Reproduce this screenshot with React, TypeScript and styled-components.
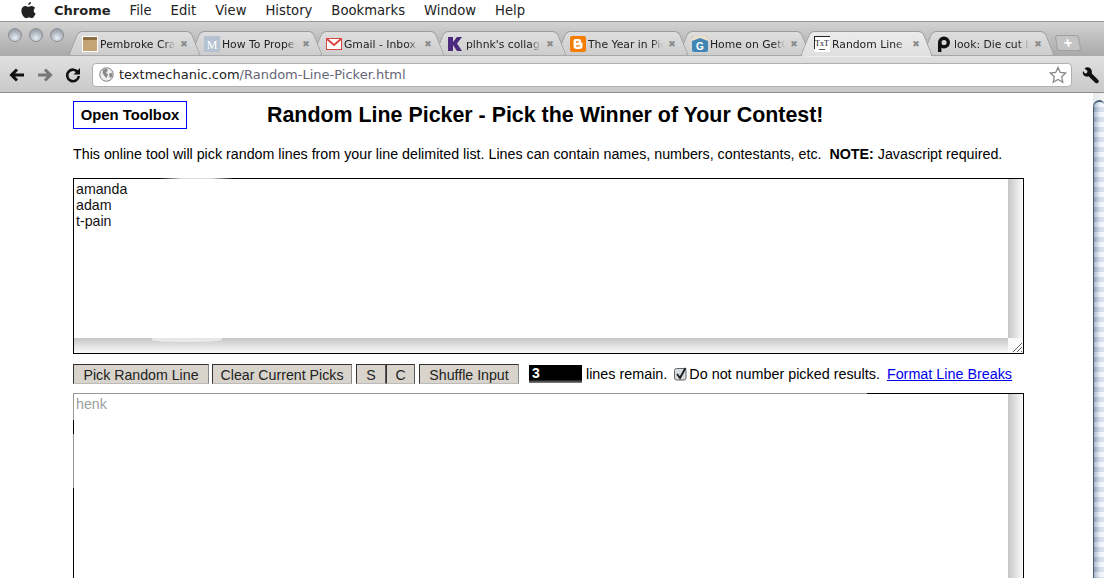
import React from 'react'
import styled, { createGlobalStyle } from 'styled-components'

const Global = createGlobalStyle`
  html, body {
    margin: 0;
    padding: 0;
    background: #fff;
    overflow: hidden;
  }
  body {
    font-family: 'Liberation Sans', Arial, sans-serif;
  }
`

const tabs = [
  { title: 'Pembroke Cra', icon: 'box' },
  { title: 'How To Prope', icon: 'm' },
  { title: 'Gmail - Inbox', icon: 'gmail' },
  { title: "plhnk's collag", icon: 'k' },
  { title: 'The Year in Pic', icon: 'blogger' },
  { title: 'Home on GetG', icon: 'glue' },
  { title: 'Random Line F', icon: 'txt', active: true },
  { title: 'look: Die cut b', icon: 'p' },
]

const menus = ['File', 'Edit', 'View', 'History', 'Bookmarks', 'Window', 'Help']

const Favicon = ({ kind }: { kind: string }) => {
  switch (kind) {
    case 'box':
      return (
        <svg width="16" height="16" viewBox="0 0 16 16">
          <rect width="16" height="16" fill="#fff" />
          <rect x="1" y="1" width="14" height="14" fill="#c4a474" />
          <rect x="1" y="1" width="14" height="3" fill="#8c6d40" />
        </svg>
      )
    case 'm':
      return (
        <svg width="16" height="16" viewBox="0 0 16 16">
          <rect width="16" height="16" rx="1" fill="#b4c2d2" />
          <text x="8" y="13" fontSize="12" fontFamily="Liberation Serif" textAnchor="middle" fill="#fff">M</text>
        </svg>
      )
    case 'gmail':
      return (
        <svg width="16" height="16" viewBox="0 0 16 16">
          <rect x="0.5" y="2.5" width="15" height="11" fill="#fff" stroke="#d9463e" />
          <path d="M1 3l7 6 7-6" fill="none" stroke="#d9463e" strokeWidth="2" />
        </svg>
      )
    case 'k':
      return (
        <svg width="14" height="16" viewBox="0 0 14 16">
          <path d="M0 1h5v5l4-5h5l-5 6.500L14 15H9L5 9v6H0z" fill="#4b2a7d" />
        </svg>
      )
    case 'blogger':
      return (
        <svg width="16" height="16" viewBox="0 0 16 16">
          <rect width="16" height="16" rx="2" fill="#f57d00" />
          <path d="M5 3h4a2 2 0 0 1 2 2v1.500h1.500V10a3 3 0 0 1-3 3h-3A3 3 0 0 1 3.500 10V5A2 2 0 0 1 5 3z" fill="#fff" />
          <path d="M6 6h2.500M6 9.800h4" stroke="#f57d00" strokeWidth="1.300" />
        </svg>
      )
    case 'glue':
      return (
        <svg width="16" height="16" viewBox="0 0 16 16">
          <rect width="16" height="16" rx="2" fill="#3f86b4" />
          <path d="M0 5l8-3 8 3V2a2 2 0 0 0-2-2H2a2 2 0 0 0-2 2z" fill="#e8e0c8" />
          <text x="8" y="14" fontSize="10" fontWeight="700" fontFamily="Liberation Sans" textAnchor="middle" fill="#fff">G</text>
        </svg>
      )
    case 'txt':
      return (
        <svg width="16" height="16" viewBox="0 0 16 16">
          <rect width="16" height="16" fill="#fff" />
          <path d="M0.500 0v13M0 0.500h16" stroke="#222" />
          <text x="8" y="10" fontSize="8" fontFamily="Liberation Serif" textAnchor="middle" fill="#111">TxT</text>
          <path d="M5 13.500h6" stroke="#555" />
        </svg>
      )
    default:
      return (
        <svg width="16" height="16" viewBox="0 0 16 16">
          <circle cx="8" cy="6.500" r="4.300" fill="none" stroke="#111" strokeWidth="3.400" />
          <path d="M3.700 6v10" stroke="#111" strokeWidth="3.400" />
        </svg>
      )
  }
}

export default function App() {
  return (
    <>
      <Global />
      <Screen>
        <MenuBar>
          <AppleIcon viewBox="0 0 16 19">
            <path d="M11.200 0c.1 1.600-1.300 3.300-3 3.200C8 1.700 9.600.1 11.200 0zM15.600 6.300c-2.200 1.400-1.900 4.700.4 5.800-.7 2-2.300 5-4 5-1 0-1.500-.7-2.900-.7s-1.900.7-2.900.7C3.900 17.100 1 13 1 9.300 1 6 3 4.200 5.200 4.200c1.300 0 2.200.8 3 .8s1.900-.9 3.400-.9c1.700 0 3.100.9 4 2.200z" fill="#222" />
          </AppleIcon>
          <AppName>Chrome</AppName>
          {menus.map((m) => (
            <MenuItem key={m}>{m}</MenuItem>
          ))}
        </MenuBar>

        <TabStrip>
          <Lights>
            <Light />
            <Light />
            <Light />
          </Lights>
          {tabs.map((t, i) => (
            <Tab key={t.title} $active={t.active} $z={t.active ? 20 : 10 - i}>
              <FaviconSlot>
                <Favicon kind={t.icon} />
              </FaviconSlot>
              <TabTitle>{t.title}</TabTitle>
              <TabClose>✖</TabClose>
            </Tab>
          ))}
          <NewTab>+</NewTab>
        </TabStrip>

        <Toolbar>
          <NavIcon viewBox="0 0 16 16">
            <path d="M8 2.500L2.500 8 8 13.500M3 8h12" fill="none" stroke="#111" strokeWidth="3" />
          </NavIcon>
          <NavIcon viewBox="0 0 16 16">
            <path d="M8 2.500L13.500 8 8 13.500M13 8H1" fill="none" stroke="#777" strokeWidth="3" />
          </NavIcon>
          <NavIcon viewBox="0 0 16 16">
            <path d="M13 5.500A5.800 5.800 0 1 0 13.800 9" fill="none" stroke="#111" strokeWidth="2.600" />
            <path d="M15 1v6.500H8.500z" fill="#111" />
          </NavIcon>
          <Omnibox>
            <GlobeIcon viewBox="0 0 16 16">
              <circle cx="8" cy="8" r="7.200" fill="#eee" stroke="#777" />
              <path d="M4 3l4-1.500 1.500 2-2 2.500 2 2-1.500 4-2-2.500L4 7zM11 7l3-1 .5 3-2 3-1.500-2z" fill="#888" />
            </GlobeIcon>
            <Url>
              textmechanic.com<span>/Random-Line-Picker.html</span>
            </Url>
            <StarIcon viewBox="0 0 18 18">
              <path d="M9 1.500l2.300 5 5.400.6-4 3.700 1.100 5.400L9 13.500l-4.800 2.700 1.100-5.400-4-3.700 5.400-.6z" fill="#fff" stroke="#888" strokeWidth="1.300" />
            </StarIcon>
          </Omnibox>
          <WrenchIcon viewBox="0 0 18 18">
            <path d="M7 1.500a4.500 4.500 0 0 0-4.500 1l3 2.500-.5 2-2 .5-2-2.500c-.5 2 0 3.500 1 4.500s3 1.500 4.500.8l7 6.700c1 .8 3 .3 3.300-1.500 0-.8-.2-1.300-.8-1.800L9.800 7.500C10.200 5 9.500 2.500 7 1.500z" fill="#111" />
          </WrenchIcon>
        </Toolbar>

        <Viewport>
          <Page>
            <Header>
              <ToolboxButton>Open Toolbox</ToolboxButton>
              <Title>Random Line Picker - Pick the Winner of Your Contest!</Title>
            </Header>
            <Intro>
              This online tool will pick random lines from your line delimited list. Lines can contain
              names, numbers, contestants, etc.&nbsp; <b>NOTE:</b> Javascript required.
            </Intro>
            <InputBox>
              amanda
              <br />
              adam
              <br />
              t-pain
              <Grip viewBox="0 0 12 12">
                <path d="M2 11l9-9M6 11l5-5M10 11l1-1" stroke="#666" strokeWidth="1" />
              </Grip>
            </InputBox>
            <Controls>
              <Button $w={136}>Pick Random Line</Button>
              <Button $w={140}>Clear Current Picks</Button>
              <ButtonPair>
                <Button $w={30} $joined>S</Button>
                <Button $w={29} $joined>C</Button>
              </ButtonPair>
              <Button $w={100}>Shuffle Input</Button>
              <Counter>3</Counter>
              <Note>lines remain.</Note>
              <CheckWrap>
                <Check viewBox="0 0 14 14">
                  <rect x="0.500" y="1.500" width="11.500" height="11.500" rx="2" fill="#d8dde2" stroke="#666" />
                  <path d="M3 7l3 4 5.500-10" fill="none" stroke="#222" strokeWidth="2" />
                </Check>
                Do not number picked results.
              </CheckWrap>
              <FormatLink href="#">Format Line Breaks</FormatLink>
            </Controls>
            <OutputBox>henk</OutputBox>
          </Page>
          <ScrollTrack>
            <ScrollThumb />
          </ScrollTrack>
        </Viewport>
      </Screen>
    </>
  )
}

const Screen = styled.div`
  width: 1104px;
  height: 578px;
  display: flex;
  flex-direction: column;
  overflow: hidden;
`
const MenuBar = styled.div`
  height: 21px;
  flex: none;
  display: flex;
  align-items: center;
  padding-left: 20px;
  background: #fff;
  font-family: 'DejaVu Sans', 'Liberation Sans', sans-serif;
  font-size: 13.2px;
  color: #222;
`
const AppleIcon = styled.svg`
  width: 16px;
  height: 18px;
  margin-right: 18px;
`
const AppName = styled.span`
  font-weight: 700;
  font-size: 13px;
  margin-right: 19px;
`
const MenuItem = styled.span`
  margin-right: 19px;
`
const TabStrip = styled.div`
  height: 35px;
  flex: none;
  display: flex;
  align-items: flex-end;
  box-sizing: border-box;
  border-top: 1px solid #9a9a9a;
  padding-left: 74px;
  position: relative;
  background: linear-gradient(#d2d2d2, #a9a9a9);
`
const Lights = styled.div`
  position: absolute;
  left: 8px;
  top: 6px;
  display: flex;
  gap: 7px;
`
const Light = styled.span`
  width: 14px;
  height: 14px;
  border-radius: 50%;
  border: 1px solid #8d8d8d;
  box-sizing: border-box;
  background: radial-gradient(circle at 50% 75%, #e8eef5, #9ea6b0 70%);
`
const Tab = styled.div<{ $active?: boolean; $z: number }>`
  width: 122px;
  height: 25px;
  box-sizing: border-box;
  flex: none;
  position: relative;
  display: flex;
  align-items: center;
  padding: 1px 6px 0 8px;
  z-index: ${(p) => p.$z};
  font-size: 10.8px;
  font-family: 'DejaVu Sans', 'Liberation Sans', sans-serif;
  color: #222;

  &::before,
  &::after {
    content: '';
    position: absolute;
    top: 0;
    bottom: ${(p) => (p.$active ? '-1px' : '0')};
    width: 60%;
    box-sizing: border-box;
    border: 1px solid #9c9c9c;
    border-bottom-color: ${(p) => (p.$active ? 'transparent' : '#a8a8a8')};
    z-index: -1;
    background: ${(p) =>
      p.$active ? 'linear-gradient(#ececec, #e0e0e0)' : 'linear-gradient(#dedede, #cdcdcd)'};
  }
  &::before {
    left: -1px;
    border-right: none;
    border-radius: 5px 0 0 3px;
    transform: skewX(-22deg);
  }
  &::after {
    right: 0;
    border-left: none;
    border-radius: 0 5px 3px 0;
    transform: skewX(22deg);
  }
`
const FaviconSlot = styled.span`
  width: 16px;
  height: 16px;
  flex: none;
  display: flex;
  margin-right: 2px;
`
const TabTitle = styled.span`
  flex: 1;
  min-width: 0;
  white-space: nowrap;
  overflow: hidden;
  -webkit-mask-image: linear-gradient(90deg, #000 85%, transparent);
  mask-image: linear-gradient(90deg, #000 85%, transparent);
`
const TabClose = styled.span`
  flex: none;
  width: 12px;
  font-size: 9px;
  color: #8a8a8a;
  text-align: center;
  margin-left: 3px;
`
const NewTab = styled.div`
  width: 22px;
  height: 14px;
  margin: 0 0 5px 6px;
  border: 1px solid #a0a0a0;
  border-radius: 3px;
  background: #c4c4c4;
  color: #fff;
  font: 700 15px/14px 'Liberation Sans', sans-serif;
  text-align: center;
  transform: skewX(10deg);
`
const Toolbar = styled.div`
  height: 37px;
  flex: none;
  box-sizing: border-box;
  border-bottom: 1px solid #8f8f8f;
  display: flex;
  align-items: center;
  padding: 1px 4px 0 9px;
  background: linear-gradient(#e0e0e0, #c9c9c9);
`
const NavIcon = styled.svg`
  width: 16px;
  height: 16px;
  margin-right: 12px;
`
const Omnibox = styled.div`
  flex: 1;
  height: 24px;
  margin-left: -1px;
  display: flex;
  align-items: center;
  gap: 5px;
  padding: 0 4px 0 6px;
  background: #fff;
  border-radius: 4px;
  border: 1px solid #b0b0b0;
  box-sizing: border-box;
`
const GlobeIcon = styled.svg`
  width: 15px;
  height: 15px;
  flex: none;
`
const Url = styled.div`
  flex: 1;
  font: 13px 'DejaVu Sans', 'Liberation Sans', sans-serif;
  color: #222;
  span {
    color: #667;
  }
`
const StarIcon = styled.svg`
  width: 18px;
  height: 18px;
`
const WrenchIcon = styled.svg`
  width: 18px;
  height: 18px;
  margin-left: 10px;
`
const Viewport = styled.div`
  flex: 1;
  min-height: 0;
  display: flex;
  justify-content: space-between;
  background: #fff;
`
const Page = styled.div`
  width: 951px;
  margin-left: 73px;
  padding-top: 8px;
`
const Header = styled.div`
  display: flex;
  align-items: center;
  height: 28px;
`
const ToolboxButton = styled.div`
  width: 114px;
  height: 28px;
  box-sizing: border-box;
  border: 1px solid #00f;
  display: flex;
  align-items: center;
  justify-content: center;
  font-size: 14.8px;
  font-weight: 700;
  color: #000;
  flex: none;
`
const Title = styled.h1`
  margin: 0 0 0 80px;
  font-size: 21.4px;
  font-weight: 700;
  white-space: nowrap;
  color: #000;
`
const Intro = styled.p`
  margin: 17px 0 16px;
  font-size: 14.27px;
  line-height: 16px;
  color: #000;
  white-space: nowrap;
`
const InputBox = styled.div`
  position: relative;
  height: 176px;
  box-sizing: border-box;
  border: 1px solid #000;
  padding: 2px 2px;
  font-size: 14.2px;
  line-height: 16px;
  color: #111;
  background:
    linear-gradient(#fff, #fff) 0 0 / calc(100% - 15px) calc(100% - 15px) no-repeat,
    linear-gradient(#fafafa, #fafafa) 100% 100% / 15px 15px no-repeat,
    linear-gradient(90deg, #c6c6c6, #fbfbfb) 100% 0 / 15px 100% no-repeat,
    linear-gradient(#c6c6c6, #fbfbfb) 0 100% / 100% 15px no-repeat;

  /* screenshot glitches: the border fades at the top, the shadow notches at the bottom */
  &::before {
    content: '';
    position: absolute;
    left: 85px;
    top: -1px;
    width: 75px;
    height: 1px;
    background: linear-gradient(90deg, transparent, #ddd 30%, #ddd 70%, transparent);
  }
  &::after {
    content: '';
    position: absolute;
    left: 78px;
    bottom: 11px;
    width: 70px;
    height: 4px;
    border-radius: 0 0 50% 50%;
    background: #fff;
    opacity: 0.55;
  }
`
const Grip = styled.svg`
  position: absolute;
  right: 0;
  bottom: 0;
  width: 12px;
  height: 12px;
`
const Controls = styled.div`
  display: flex;
  align-items: center;
  height: 20px;
  margin: 10px 0 9px;
  font-size: 14.35px;
  color: #000;
  white-space: nowrap;
`
const Button = styled.div<{ $w: number; $joined?: boolean }>`
  width: ${(p) => p.$w}px;
  height: 20px;
  box-sizing: border-box;
  flex: none;
  padding-top: 1px;
  display: flex;
  align-items: center;
  justify-content: center;
  font-size: 14.2px;
  color: #222;
  background: #d8d4cc;
  border: 1px solid #333;
  border-bottom-color: #bbb;
  border-right-color: ${(p) => (p.$joined ? '#555' : '#888')};
  margin-right: ${(p) => (p.$joined ? '0' : '3px')};
`
const ButtonPair = styled.div`
  display: flex;
  margin: 0 4px 0 1px;
`
const Counter = styled.div`
  width: 53px;
  height: 18px;
  margin-left: 7px;
  box-sizing: border-box;
  padding-left: 3px;
  background: linear-gradient(#000 80%, #888);
  color: #fff;
  font-size: 14px;
  font-weight: 700;
  line-height: 16px;
`
const Note = styled.span`
  margin-left: 4px;
`
const CheckWrap = styled.span`
  display: flex;
  align-items: center;
  margin-left: 7px;
`
const Check = styled.svg`
  width: 14px;
  height: 14px;
  margin-right: 1px;
`
const FormatLink = styled.a`
  margin-left: 7px;
  font-size: 14.35px;
  color: #00e;
`
const OutputBox = styled.div`
  position: relative;
  height: 300px;
  box-sizing: border-box;
  border: 1px solid #000;
  border-bottom: none;
  padding: 2px 2px;
  font-size: 14.2px;
  line-height: 16px;
  color: #98a0a0;
  background:
    linear-gradient(#fff, #fff) 0 0 / calc(100% - 15px) 100% no-repeat,
    linear-gradient(90deg, #c6c6c6, #fbfbfb) 100% 0 / 15px 100% no-repeat;

  /* the grey parts of the focus ring left in the screenshot */
  &::before {
    content: '';
    position: absolute;
    left: -1px;
    top: -1px;
    width: 794px;
    height: 1px;
    background: #999;
  }
  &::after {
    content: '';
    position: absolute;
    left: -1px;
    top: 0;
    width: 1px;
    height: 94px;
    background: linear-gradient(#999 26px, #000 26px, #000 40px, #999 40px);
  }
`
const ScrollTrack = styled.div`
  width: 11px;
  flex: none;
  padding-top: 7px;
  box-sizing: border-box;
  display: flex;
  background: linear-gradient(90deg, #e4e8ec, #f4f4f4);
`
const ScrollThumb = styled.div`
  flex: 1;
  border-radius: 7px 5px 0 0;
  border-left: 1px solid #4a6178;
  border-top: 2px solid #4a6178;
  background:
    repeating-linear-gradient(rgba(255, 255, 255, 0.25) 0 5px, rgba(120, 140, 170, 0.18) 5px 10px),
    linear-gradient(90deg, #8fa0b4, #c0ccda 30%, #e8f0fa 65%, #f2f6fc);
`
